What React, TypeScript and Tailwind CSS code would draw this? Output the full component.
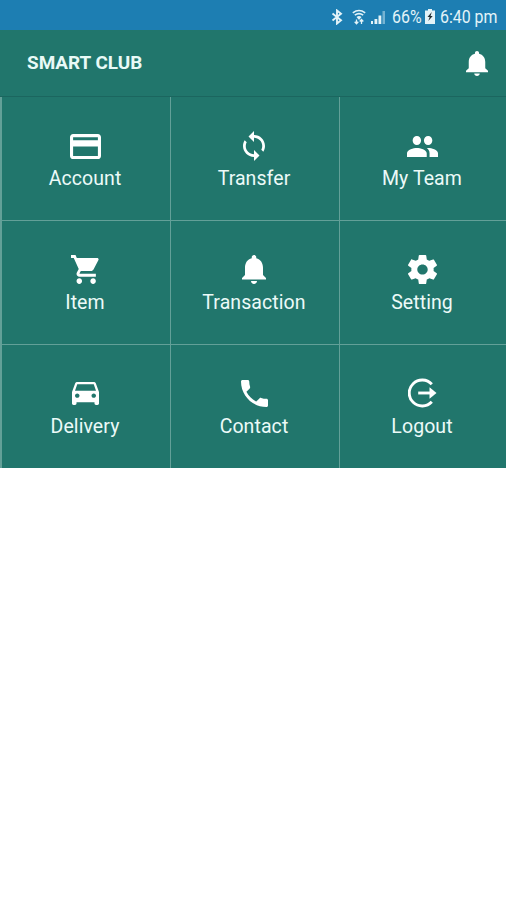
import type { ReactNode } from 'react';

const BELL =
  'M12 22c1.1 0 2-.9 2-2h-4c0 1.1.89 2 2 2zm6-6v-5c0-3.07-1.64-5.64-4.5-6.32V4c0-.83-.67-1.5-1.5-1.5s-1.5.67-1.5 1.5v.68C7.63 5.36 6 7.92 6 11v5l-2 2v1h16v-1l-2-2z';

type GlyphProps = { w: number; h: number; box: string; children: ReactNode };

function Glyph({ w, h, box, children }: GlyphProps) {
  return (
    <svg width={w} height={h} viewBox={box} preserveAspectRatio="none" fill="currentColor">
      {children}
    </svg>
  );
}

const items: { label: string; icon: ReactNode }[] = [
  {
    label: 'Account',
    icon: (
      <Glyph w={31} h={25} box="2 4 20 16">
        <path d="M20 4H4c-1.11 0-1.99.89-1.99 2L2 18c0 1.11.89 2 2 2h16c1.11 0 2-.89 2-2V6c0-1.11-.89-2-2-2zm0 14H4v-6h16v6zm0-10H4V6h16v2z" />
      </Glyph>
    ),
  },
  {
    label: 'Transfer',
    icon: (
      <Glyph w={22} h={30} box="4 1 16 22">
        <path d="M12 4V1L8 5l4 4V6c3.31 0 6 2.69 6 6 0 1.01-.25 1.97-.7 2.8l1.46 1.46C19.54 15.03 20 13.57 20 12c0-4.42-3.58-8-8-8zm0 14c-3.31 0-6-2.69-6-6 0-1.01.25-1.97.7-2.8L5.24 7.74C4.46 8.97 4 10.43 4 12c0 4.42 3.58 8 8 8v3l4-4-4-4v3z" />
      </Glyph>
    ),
  },
  {
    label: 'My Team',
    icon: (
      <Glyph w={31} h={21} box="1 5 22 14">
        <path d="M16 11c1.66 0 2.99-1.34 2.99-3S17.66 5 16 5c-1.66 0-3 1.34-3 3s1.34 3 3 3zm-8 0c1.66 0 2.99-1.34 2.99-3S9.66 5 8 5C6.34 5 5 6.34 5 8s1.34 3 3 3zm0 2c-2.33 0-7 1.17-7 3.5V19h14v-2.5c0-2.33-4.67-3.5-7-3.5zm8 0c-.29 0-.62.02-.97.05 1.16.84 1.97 1.97 1.97 3.45V19h6v-2.5c0-2.33-4.67-3.5-7-3.5z" />
      </Glyph>
    ),
  },
  {
    label: 'Item',
    icon: (
      <Glyph w={29} h={29} box="1 2 21 20">
        <path d="M7 18c-1.1 0-1.99.9-1.99 2S5.9 22 7 22s2-.9 2-2-.9-2-2-2zM1 2v2h2l3.6 7.59-1.35 2.45c-.16.28-.25.61-.25.96 0 1.1.9 2 2 2h12v-2H7.42c-.14 0-.25-.11-.25-.25l.03-.12.9-1.63h7.45c.75 0 1.41-.41 1.75-1.03l3.58-6.49c.08-.14.12-.31.12-.48 0-.55-.45-1-1-1H5.21l-.94-2H1zm16 16c-1.1 0-1.99.9-1.99 2s.89 2 1.99 2 2-.9 2-2-.9-2-2-2z" />
      </Glyph>
    ),
  },
  {
    label: 'Transaction',
    icon: (
      <Glyph w={24} h={29} box="4 2.5 16 19.5">
        <path d={BELL} />
      </Glyph>
    ),
  },
  {
    label: 'Setting',
    icon: (
      <Glyph w={29} h={29} box="2.27 2 19.46 20">
        <path d="M19.43 12.98c.04-.32.07-.64.07-.98s-.03-.66-.07-.98l2.11-1.65c.19-.15.24-.42.12-.64l-2-3.46c-.12-.22-.39-.3-.61-.22l-2.49 1c-.52-.4-1.08-.73-1.69-.98l-.38-2.65C14.46 2.18 14.25 2 14 2h-4c-.25 0-.46.18-.49.42l-.38 2.65c-.61.25-1.17.59-1.69.98l-2.49-1c-.23-.09-.49 0-.61.22l-2 3.46c-.13.22-.07.49.12.64l2.11 1.65c-.04.32-.07.65-.07.98s.03.66.07.98l-2.11 1.65c-.19.15-.24.42-.12.64l2 3.46c.12.22.39.3.61.22l2.49-1c.52.4 1.08.73 1.69.98l.38 2.65c.03.24.24.42.49.42h4c.25 0 .46-.18.49-.42l.38-2.65c.61-.25 1.17-.59 1.69-.98l2.49 1c.23.09.49 0 .61-.22l2-3.46c.12-.22.07-.49-.12-.64l-2.11-1.65zM12 15.5c-1.93 0-3.5-1.57-3.5-3.5s1.57-3.5 3.5-3.5 3.5 1.57 3.5 3.5-1.57 3.5-3.5 3.5z" />
      </Glyph>
    ),
  },
  {
    label: 'Delivery',
    icon: (
      <Glyph w={27} h={23} box="3 5 18 16">
        <path d="M18.92 6.01C18.72 5.42 18.16 5 17.5 5h-11c-.66 0-1.21.42-1.42 1.01L3 12v8c0 .55.45 1 1 1h1c.55 0 1-.45 1-1v-1h12v1c0 .55.45 1 1 1h1c.55 0 1-.45 1-1v-8l-2.08-5.99zM6.5 16c-.83 0-1.5-.67-1.5-1.5S5.67 13 6.5 13s1.5.67 1.5 1.5S7.33 16 6.5 16zm11 0c-.83 0-1.5-.67-1.5-1.5s.67-1.5 1.5-1.5 1.5.67 1.5 1.5-.67 1.5-1.5 1.5zM5 11l1.5-4.5h11L19 11H5z" />
      </Glyph>
    ),
  },
  {
    label: 'Contact',
    icon: (
      <Glyph w={27} h={27} box="3 3 18 18">
        <path d="M6.62 10.79c1.44 2.83 3.76 5.14 6.59 6.59l2.2-2.2c.27-.27.67-.36 1.02-.24 1.12.37 2.33.57 3.57.57.55 0 1 .45 1 1V20c0 .55-.45 1-1 1-9.39 0-17-7.61-17-17 0-.55.45-1 1-1h3.5c.55 0 1 .45 1 1 0 1.25.2 2.45.57 3.57.11.35.03.74-.25 1.02l-2.2 2.2z" />
      </Glyph>
    ),
  },
  {
    label: 'Logout',
    icon: (
      <Glyph w={29} h={30} box="0 0 29 30">
        <g fill="none" stroke="currentColor" strokeWidth="2.9">
          <path d="M23.8 6.2A13 13 0 1 0 23.8 23.8" />
          <path d="M10.2 15H24" />
        </g>
        <path d="M21.5 9.3L28.5 15l-7 5.700z" />
      </Glyph>
    ),
  },
];

function StatusBar() {
  return (
    <div className="flex h-[30px] items-center justify-end bg-[#1d7eb2] pt-1 pr-2 text-[#e3f3f8]">
      <svg width="12" height="16" viewBox="0 0 12 16" fill="none" stroke="currentColor" strokeWidth="1.9" className="mr-[9px] mb-px">
        <path d="M1.5 4.5L10 11.2 6 14.5v-13L10 4.8 1.5 11.5" />
      </svg>
      <svg width="14" height="16" viewBox="0 0 14 16" fill="none" stroke="currentColor" className="mr-[5px] mb-px">
        <path d="M.8 3.8Q7-.8 13.2 3.8M2.8 6.2Q7 3 11.2 6.2" strokeWidth="1.6" />
        <path d="M4.5 8Q7 6 9.5 8L7 11z" fill="currentColor" stroke="none" />
        <path d="M4.5 14.5v-4M2.7 12.7l1.8 2 1.8-2M9.5 15v-4M7.7 12.5l1.8-2 1.8 2" strokeWidth="1.3" />
      </svg>
      <svg width="15" height="14" viewBox="0 0 15 14" fill="currentColor" className="mr-[6px] mb-px">
        <path d="M0 11h2v3H0zM3.5 9h2.8v5H3.5zM7.5 5.5h2.8V14H7.5z" />
        <path d="M11.5 1H14v13h-2.5z" opacity=".45" />
      </svg>
      <span className="w-[29px] whitespace-nowrap">
        <span className="inline-block origin-left scale-x-[0.86] text-[18.5px] leading-6">66%</span>
      </span>
      <svg width="10" height="15" viewBox="0 0 10 15" className="mr-[5px] mb-px ml-[4px]">
        <path d="M3 0h4v1.5h3V15H0V1.5h3z" fill="currentColor" />
        <path d="M6.8 3L2.5 8h2.2L3.3 12 7.7 6.9H5.5z" fill="#222d32" />
      </svg>
      <span className="w-[58px] whitespace-nowrap">
        <span className="inline-block origin-left scale-x-[0.86] text-[18.5px] leading-6">6:40 pm</span>
      </span>
    </div>
  );
}

export default function App() {
  return (
    <div className="h-[900px] w-[506px] overflow-hidden bg-white font-['Roboto','Liberation_Sans',sans-serif]">
      <StatusBar />
      <header className="flex h-[67px] items-center justify-between border-b border-[#1b665f] bg-[#21766c] pr-[18px] pl-[27px] text-white">
        <h1 className="text-[18.9px] leading-6 font-bold text-[#e9faf7]">SMART CLUB</h1>
        <Glyph w={22} h={25} box="4 2.5 16 19.5">
          <path d={BELL} />
        </Glyph>
      </header>
      <main className="grid h-[371px] grid-cols-[170px_169px_167px] grid-rows-[124px_124px_123px] bg-[#21766c] text-white">
        {items.map((item, i) => (
          <button
            key={item.label}
            className={`flex flex-col items-center border-[#63a098] pr-[2px] ${i < 3 ? 'pt-[33px]' : 'pt-8'} ${i % 3 === 0 ? 'border-l-2' : 'border-l'} ${i < 6 ? 'border-b' : ''}`}
          >
            <span className="flex h-[32px] items-center justify-center">{item.icon}</span>
            <span
              className={`text-[19.5px] leading-6 tracking-[0.08px] text-[#ecfaf8] ${i < 3 ? 'mt-[5px]' : 'mt-[6px]'}`}
            >
              {item.label}
            </span>
          </button>
        ))}
      </main>
    </div>
  );
}
